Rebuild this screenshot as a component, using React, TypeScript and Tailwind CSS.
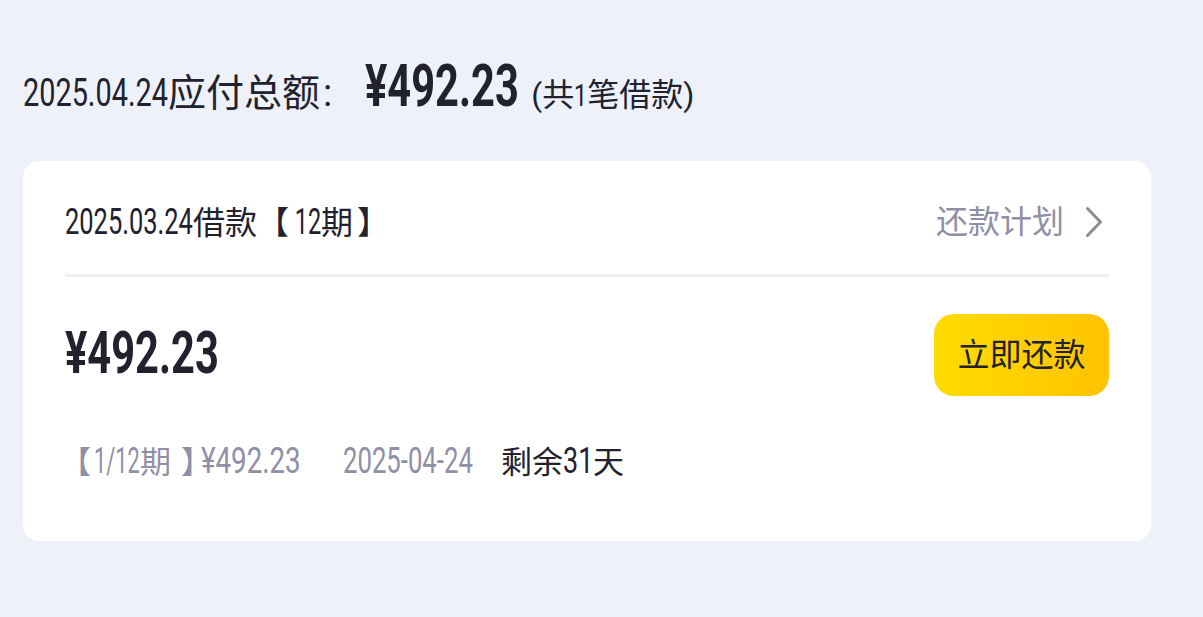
import { useLayoutEffect, useRef, useState, type ReactNode } from 'react';

const font = { fontFamily: 'Roboto, "Noto Sans CJK SC", sans-serif' };

// condensed latin run: squeezes its text to the given width
function C({ w, children, className = '' }: { w: number; children: ReactNode; className?: string }) {
  const ref = useRef<HTMLSpanElement>(null);
  const [s, setS] = useState(1);
  useLayoutEffect(() => {
    const fit = () => {
      if (ref.current) setS(w / ref.current.offsetWidth);
    };
    fit();
    document.fonts?.ready.then(fit);
  }, [w]);
  return (
    <span className={`inline-block whitespace-pre ${className}`} style={{ width: w }}>
      <span ref={ref} className="inline-block origin-left" style={{ transform: `scaleX(${s})` }}>
        {children}
      </span>
    </span>
  );
}

function Chevron() {
  return (
    <svg width="18" height="32" viewBox="0 0 18 32" fill="none" className="ml-[21px] mr-[6px]">
      <path d="M2.5 2.5 L15.5 16 L2.5 29.5" stroke="#8c8c8c" strokeWidth="3" strokeLinecap="round" strokeLinejoin="round" />
    </svg>
  );
}

export default function App() {
  return (
    <div className="w-[1203px] h-[617px] bg-[#eef1fa] pt-[41px] px-[23px] text-[#21222e]" style={font}>
      <div className="flex items-baseline h-[66px]">
        <C w={145} className="text-[38px]">2025.04.24</C>
        <span className="text-[38px]">应付总额</span>
        <span className="text-[38px] ml-[3px]">:</span>
        <C w={154} className="text-[60px] font-bold ml-[33px]">¥492.23</C>
        <span className="text-[32px] ml-[12px]">
          (共<C w={13}>1</C>笔借款)
        </span>
      </div>

      <div className="mt-[54px] w-[1128px] h-[380px] bg-white rounded-[16px] px-[42px]">
        <div className="flex items-center justify-between h-[116px] border-b-[3px] border-[#f0f0f7] pt-[9px]">
          <span className="text-[32px]">
            <C w={128} className="text-[36px]">2025.03.24</C>
            借款【<C w={32} className="text-[36px]"> 12</C>期<C w={4} className="text-[36px]"> </C>】
          </span>
          <span className="flex items-center text-[32px] text-[#8f8fa6]">
            还款计划
            <Chevron />
          </span>
        </div>

        <div className="flex items-center justify-between mt-[37px]">
          <C w={154} className="text-[60px] font-bold leading-[82px] -mt-[4px]">¥492.23</C>
          <button className="w-[175px] h-[82px] rounded-[20px] bg-gradient-to-r from-[#ffdb00] to-[#ffc300] text-[32px] text-[#21222e]">
            立即还款
          </button>
        </div>

        <div className="flex items-baseline mt-[38px] text-[31px]">
          <span className="text-[#8f8fa6] whitespace-nowrap">
            <span className="-ml-[5px]">【</span>
            <C w={46} className="text-[36px] ml-[3px]">1/12</C>期<C w={10} className="text-[36px]"> </C>
            <span className="tracking-[-11px]">】</span>
            <C w={100} className="text-[36px]">¥492.23</C>
          </span>
          <C w={130} className="text-[36px] text-[#8f8fa6] ml-[42px]">2025-04-24</C>
          <span className="ml-[28px]">
            剩余<C w={30} className="text-[36px]">31</C>天
          </span>
        </div>
      </div>
    </div>
  );
}
